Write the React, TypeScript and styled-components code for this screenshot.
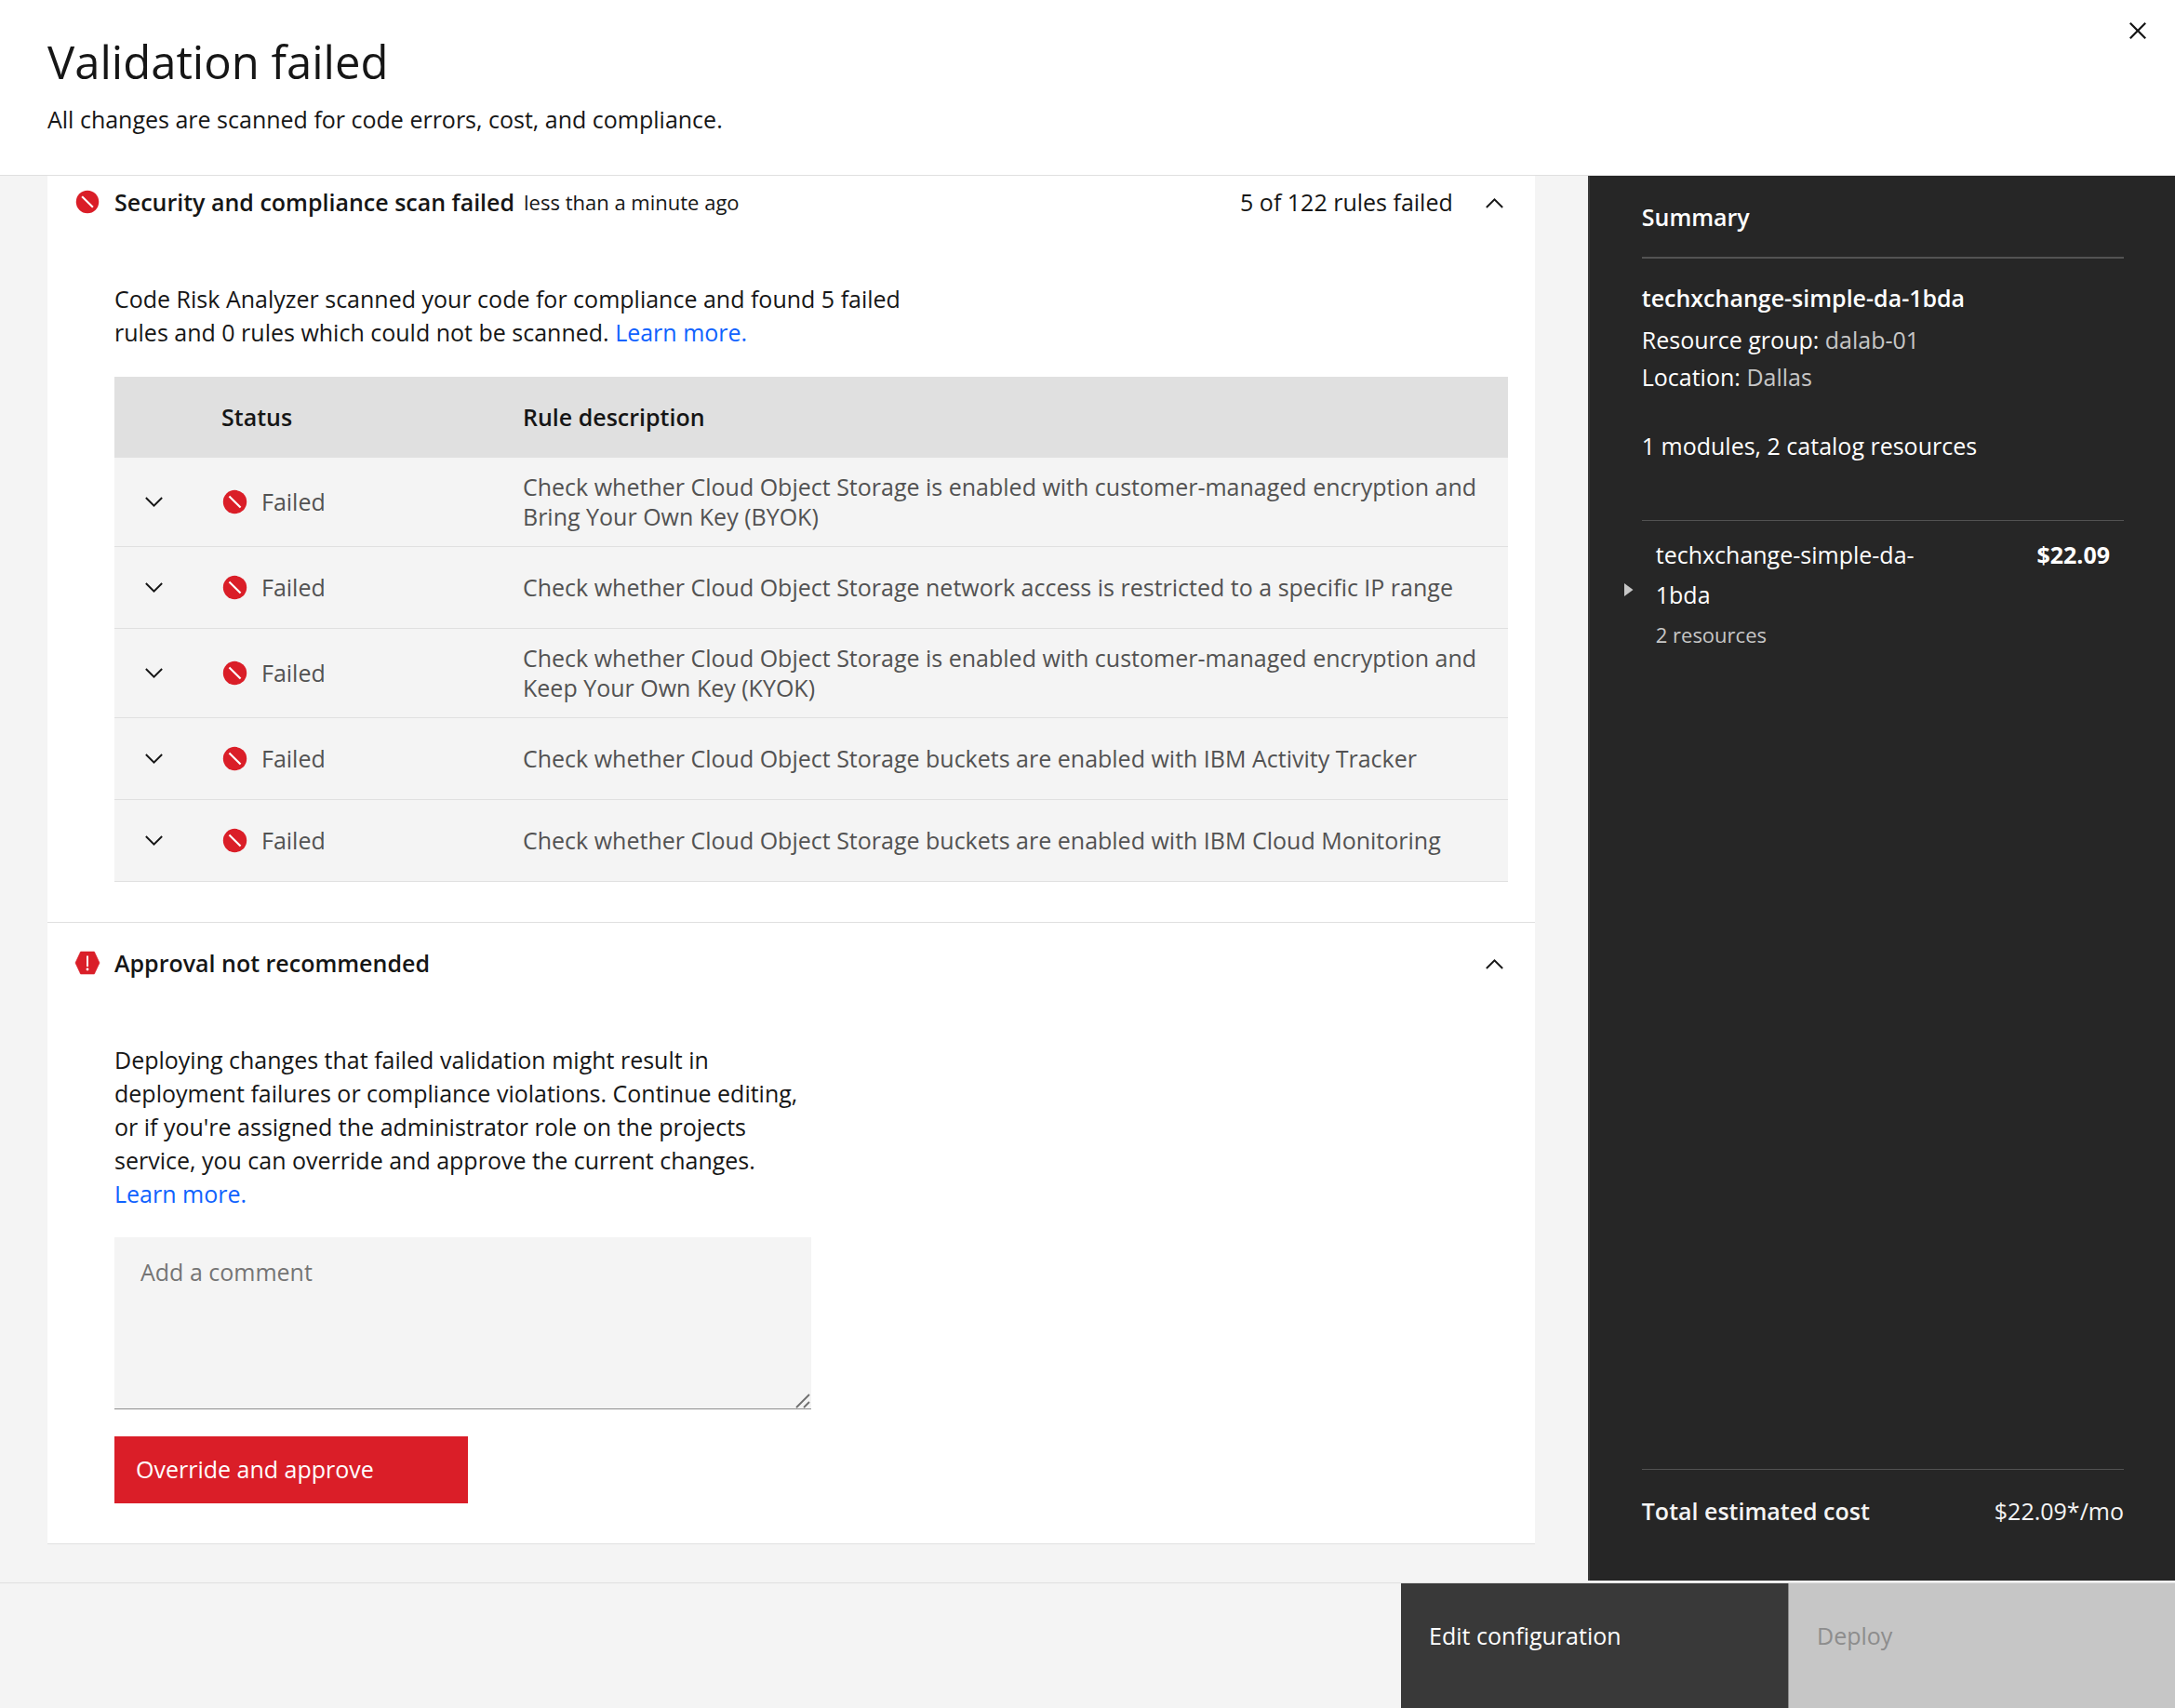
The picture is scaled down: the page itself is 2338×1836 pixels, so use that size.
import React, { useState } from 'react';
import styled, { createGlobalStyle } from 'styled-components';

const color = {
  text: '#161616',
  textSecondary: '#525252',
  placeholder: '#757575',
  border: '#e0e0e0',
  layer: '#f4f4f4',
  link: '#0f62fe',
  danger: '#da1e28',
  dark: '#262626',
  darkHover: '#393939',
  darkBorder: '#525252',
  onDark: '#f4f4f4',
  onDarkSecondary: '#c6c6c6',
  disabled: '#c6c6c6',
  disabledText: '#8d8d8d',
};

const GlobalStyle = createGlobalStyle`
  *, *::before, *::after { box-sizing: border-box; }
  body {
    margin: 0;
    background: ${color.layer};
    color: ${color.text};
    font-family: "Open Sans", "Noto Sans", sans-serif;
    font-size: 25px;
    line-height: 36px;
  }
  h1, h2, h3, p, dl, dd { margin: 0; }
  button, textarea { font: inherit; }
  svg { display: block; flex: none; }
`;

const Page = styled.div`
  display: flex;
  flex-direction: column;
  min-height: 100vh;
`;

const Header = styled.header`
  display: flex;
  justify-content: space-between;
  align-items: flex-start;
  padding: 0 22px 0 51px;
  background: #fff;
  border-bottom: 1px solid ${color.border};
`;

const Heading = styled.div`
  padding: 34px 0 42px;
`;

const Title = styled.h1`
  margin-bottom: 12px;
  font-size: 49px;
  font-weight: 400;
  line-height: 64px;
`;

const IconButton = styled.button`
  display: flex;
  padding: 0;
  border: 0;
  background: none;
  color: inherit;
  cursor: pointer;
`;

const CloseButton = styled(IconButton)`
  margin-top: 15px;
`;

const Body = styled.div`
  display: flex;
  flex: 1;
`;

const Main = styled.main`
  flex: 1;
  min-width: 0;
  padding: 0 57px 41px 51px;
`;

const Section = styled.section<{ $top: number }>`
  padding: ${(p) => p.$top}px 29px 43px;
  background: #fff;
  border-bottom: 1px solid ${color.border};
`;

const SectionHeader = styled.div`
  display: flex;
  align-items: center;
  margin-bottom: 68px;
`;

const SectionTitle = styled.h2`
  margin-left: 15px;
  font-size: 25px;
  font-weight: 600;
  line-height: 36px;
`;

const Timestamp = styled.span`
  margin-left: 10px;
  font-size: 22px;
`;

const SectionAside = styled.div`
  display: flex;
  align-items: center;
  gap: 30px;
  margin-left: auto;
`;

const CollapseButton = styled(IconButton)`
  padding-top: 2px;
`;

const SectionBody = styled.div`
  padding-left: 43px;
`;

const Intro = styled.p`
  max-width: 880px;
  margin-bottom: 30px;
`;

const Link = styled.a`
  color: ${color.link};
  text-decoration: none;
`;

const Table = styled.table`
  width: 100%;
  border-spacing: 0;
  table-layout: fixed;
  line-height: 32px;
  text-align: left;
`;

const Column = styled.col<{ $width?: number }>`
  width: ${(p) => (p.$width ? `${p.$width}px` : 'auto')};
`;

const HeadCell = styled.th`
  height: 87px;
  padding: 0 28px 2px 0;
  background: ${color.border};
  font-weight: 600;
`;

const Cell = styled.td`
  height: 88px;
  padding: 15px 24px 16px 0;
  background: ${color.layer};
  border-bottom: 1px solid ${color.border};
  color: ${color.textSecondary};
  vertical-align: middle;
`;

const ExpandCell = styled(Cell)`
  padding-left: 28px;
  color: ${color.text};
`;

const Status = styled.div`
  display: flex;
  align-items: center;
  gap: 14px;
`;

const ApprovalForm = styled.form`
  max-width: 749px;
`;

const CommentBox = styled.div`
  position: relative;
  margin: 29px 0;
`;

const Comment = styled.textarea`
  display: block;
  width: 100%;
  height: 185px;
  padding: 19px 28px;
  border: 0;
  border-bottom: 1px solid ${color.disabledText};
  border-radius: 0;
  background: ${color.layer};
  color: ${color.text};
  resize: none;
  &::placeholder { color: ${color.placeholder}; opacity: 1; }
`;

const Grip = styled.svg`
  position: absolute;
  right: 1px;
  bottom: 1px;
  pointer-events: none;
`;

const DangerButton = styled.button`
  display: block;
  width: 380px;
  height: 72px;
  padding: 0 23px 2px;
  border: 0;
  background: ${color.danger};
  color: #fff;
  text-align: left;
  cursor: pointer;
`;

const Panel = styled.aside`
  display: flex;
  flex: 0 0 27%;
  flex-direction: column;
  margin-bottom: 2px;
  padding: 26px 55px 57px 56px;
  background: ${color.dark};
  border-left: 2px solid ${color.darkHover};
  color: #fff;
`;

const PanelTitle = styled.h2`
  margin-bottom: 24px;
  padding-bottom: 25px;
  border-bottom: 2px solid ${color.darkBorder};
  font-size: 25px;
  font-weight: 600;
  line-height: 36px;
`;

const ProjectName = styled.h3`
  margin-bottom: 7px;
  font-size: 25px;
  font-weight: 600;
  line-height: 36px;
`;

const Detail = styled.div`
  line-height: 40px;
`;

const Muted = styled.span`
  color: ${color.onDarkSecondary};
`;

const Counts = styled.p`
  margin: 34px 0 60px;
  line-height: 40px;
`;

const CostItem = styled.div`
  display: flex;
  align-items: center;
  padding: 4px 15px 0 0;
  border-top: 1px solid ${color.darkBorder};
  line-height: 43px;
`;

const Disclosure = styled(IconButton)`
  margin: 0 24px 0 -19px;
`;

const ItemName = styled.div`
  max-width: 310px;
  padding-top: 11px;
`;

const ItemNote = styled.div`
  color: ${color.onDarkSecondary};
  font-size: 22px;
`;

const Price = styled.strong`
  align-self: flex-start;
  margin-left: auto;
  padding-top: 11px;
  font-weight: 700;
`;

const Total = styled.div`
  display: flex;
  justify-content: space-between;
  margin-top: auto;
  padding-top: 26px;
  border-top: 1px solid ${color.darkBorder};
  color: ${color.onDark};
`;

const TotalLabel = styled.span`
  font-weight: 600;
`;

const Footer = styled.footer`
  display: flex;
  justify-content: flex-end;
  border-top: 1px solid ${color.border};
`;

const FooterButton = styled.button`
  display: flex;
  align-items: flex-start;
  width: 416px;
  padding: 38px 30px 60px;
  border: 0;
  background: ${color.darkHover};
  color: #fff;
  cursor: pointer;
  &:disabled {
    border-left: 1px solid ${color.disabledText};
    background: ${color.disabled};
    color: ${color.disabledText};
    cursor: not-allowed;
  }
`;

const FailedIcon = ({ size = 28 }: { size?: number }) => (
  <svg width={size} height={size} viewBox="0 0 32 32" aria-hidden="true">
    <circle cx="16" cy="16" r="14" fill={color.danger} />
    <path d="M9.3 9.3 22.7 22.7" stroke="#fff" strokeWidth="2.4" />
  </svg>
);

const WarningHexIcon = () => (
  <svg width="28" height="28" viewBox="0 0 28 28" aria-hidden="true">
    <path
      d="M6.6 2h14.8L27 14l-5.6 12H6.6L1 14z"
      fill={color.danger}
      stroke={color.danger}
      strokeWidth="0.6"
      strokeLinejoin="round"
    />
    <path d="M14 6.5v11.5" stroke="#fff" strokeWidth="2" />
    <circle cx="14" cy="21" r="1.4" fill="#fff" />
  </svg>
);

const Chevron = ({ up = false }: { up?: boolean }) => (
  <svg width="29" height="29" viewBox="0 0 32 32" fill="currentColor" aria-hidden="true">
    <path d={up ? 'M16 10 26.3 20.2 24.8 21.7 16 13 7.2 21.7 5.7 20.2z' : 'M16 22 5.7 11.8 7.2 10.3 16 19 24.8 10.3 26.3 11.8z'} />
  </svg>
);

const CloseIcon = () => (
  <svg width="36" height="36" viewBox="0 0 32 32" fill="currentColor" aria-hidden="true">
    <path d="M17.41 16 24 9.41 22.59 8 16 14.59 9.41 8 8 9.41 14.59 16 8 22.59 9.41 24 16 17.41 22.59 24 24 22.59z" />
  </svg>
);

const rules = [
  'Check whether Cloud Object Storage is enabled with customer-managed encryption and Bring Your Own Key (BYOK)',
  'Check whether Cloud Object Storage network access is restricted to a specific IP range',
  'Check whether Cloud Object Storage is enabled with customer-managed encryption and Keep Your Own Key (KYOK)',
  'Check whether Cloud Object Storage buckets are enabled with IBM Activity Tracker',
  'Check whether Cloud Object Storage buckets are enabled with IBM Cloud Monitoring',
];

const RulesTable = () => (
  <Table>
    <colgroup>
      <Column $width={115} />
      <Column $width={324} />
      <Column />
    </colgroup>
    <thead>
      <tr>
        <HeadCell aria-label="Expand" />
        <HeadCell scope="col">Status</HeadCell>
        <HeadCell scope="col">Rule description</HeadCell>
      </tr>
    </thead>
    <tbody>
      {rules.map((rule) => (
        <tr key={rule}>
          <ExpandCell>
            <IconButton type="button" aria-label="Expand row">
              <Chevron />
            </IconButton>
          </ExpandCell>
          <Cell>
            <Status>
              <FailedIcon size={29} />
              Failed
            </Status>
          </Cell>
          <Cell>{rule}</Cell>
        </tr>
      ))}
    </tbody>
  </Table>
);

export default function App() {
  const [comment, setComment] = useState('');

  return (
    <Page>
      <GlobalStyle />
      <Header>
        <Heading>
          <Title>Validation failed</Title>
          <p>All changes are scanned for code errors, cost, and compliance.</p>
        </Heading>
        <CloseButton type="button" aria-label="Close">
          <CloseIcon />
        </CloseButton>
      </Header>

      <Body>
        <Main>
          <Section $top={10}>
            <SectionHeader>
              <FailedIcon />
              <SectionTitle>Security and compliance scan failed</SectionTitle>
              <Timestamp>less than a minute ago</Timestamp>
              <SectionAside>
                <span>5 of 122 rules failed</span>
                <CollapseButton type="button" aria-label="Collapse scan results">
                  <Chevron up />
                </CollapseButton>
              </SectionAside>
            </SectionHeader>
            <SectionBody>
              <Intro>
                Code Risk Analyzer scanned your code for compliance and found 5 failed rules and 0 rules which could
                not be scanned. <Link href="#scan">Learn more.</Link>
              </Intro>
              <RulesTable />
            </SectionBody>
          </Section>

          <Section $top={25}>
            <SectionHeader>
              <WarningHexIcon />
              <SectionTitle>Approval not recommended</SectionTitle>
              <SectionAside>
                <CollapseButton type="button" aria-label="Collapse approval">
                  <Chevron up />
                </CollapseButton>
              </SectionAside>
            </SectionHeader>
            <SectionBody>
              <ApprovalForm onSubmit={(e) => e.preventDefault()}>
                <p>
                  Deploying changes that failed validation might result in deployment failures or compliance
                  violations. Continue editing, or if you're assigned the administrator role on the projects service,
                  you can override and approve the current changes. <Link href="#approval">Learn more.</Link>
                </p>
                <CommentBox>
                  <Comment
                    aria-label="Add a comment"
                    placeholder="Add a comment"
                    value={comment}
                    onChange={(e) => setComment(e.target.value)}
                  />
                  <Grip width="16" height="16" viewBox="0 0 16 16" fill="none" stroke="#6f6f6f" strokeWidth="1.8" aria-hidden="true">
                    <path d="M1 15 15 1M9 15l6-6" />
                  </Grip>
                </CommentBox>
                <DangerButton type="submit">Override and approve</DangerButton>
              </ApprovalForm>
            </SectionBody>
          </Section>
        </Main>

        <Panel>
          <PanelTitle>Summary</PanelTitle>
          <ProjectName>techxchange-simple-da-1bda</ProjectName>
          <Detail>
            Resource group: <Muted>dalab-01</Muted>
          </Detail>
          <Detail>
            Location: <Muted>Dallas</Muted>
          </Detail>
          <Counts>1 modules, 2 catalog resources</Counts>
          <CostItem>
            <Disclosure type="button" aria-label="Show resources">
              <svg width="10" height="14" viewBox="0 0 10 14" aria-hidden="true">
                <path d="M0 0 9.5 7 0 14z" fill={color.onDarkSecondary} />
              </svg>
            </Disclosure>
            <ItemName>
              techxchange-simple-da-1bda
              <ItemNote>2 resources</ItemNote>
            </ItemName>
            <Price>$22.09</Price>
          </CostItem>
          <Total>
            <TotalLabel>Total estimated cost</TotalLabel>
            <span>$22.09*/mo</span>
          </Total>
        </Panel>
      </Body>

      <Footer>
        <FooterButton type="button">Edit configuration</FooterButton>
        <FooterButton type="button" disabled>
          Deploy
        </FooterButton>
      </Footer>
    </Page>
  );
}
